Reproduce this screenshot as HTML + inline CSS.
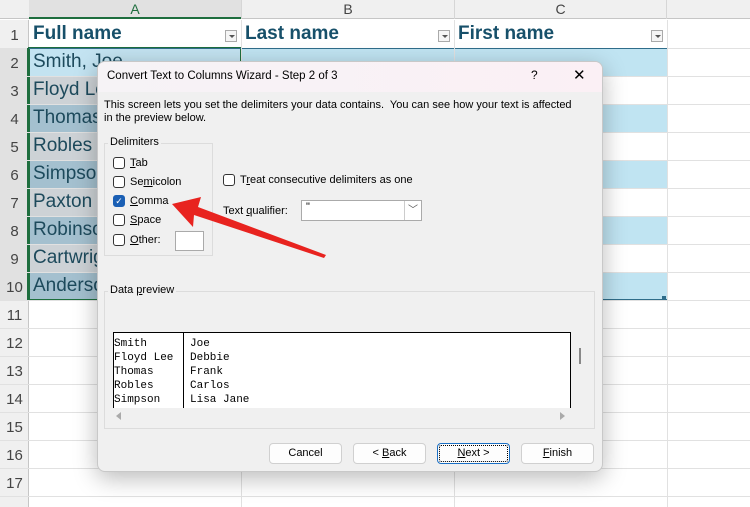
<!DOCTYPE html>
<html><head><meta charset="utf-8"><style>
*{margin:0;padding:0;box-sizing:border-box}
body{width:750px;height:507px;overflow:hidden;background:#fff;font-family:"Liberation Sans",sans-serif;position:relative}
.abs{position:absolute}
.hl{position:absolute;height:1px;background:#e1e1e1}
.vl{position:absolute;width:1px;background:#e1e1e1}
.rn{position:absolute;left:0;width:29px;text-align:center;font-size:15px;color:#444}
.cell{position:absolute;font-size:19px;color:#1d4a5c;padding-left:4px;line-height:28px}
.dlg{font-family:"Liberation Sans",sans-serif;font-size:11px;color:#000}
.cb{position:absolute;width:12px;height:12px;border:1px solid #333;border-radius:3px;background:#fff}
.btn{position:absolute;top:443px;width:73px;height:21px;border:1px solid #d0d0d0;border-radius:4px;background:#fdfdfd;text-align:center;line-height:19px;font-size:11px}
.mono{font-family:"Liberation Mono",monospace;font-size:11px;line-height:14px}
.dd{position:absolute;width:12px;height:12px;border:1px solid #aaa;background:#f5f5f5}
.dd:after{content:"";position:absolute;left:3px;top:4px;border-left:3px solid transparent;border-right:3px solid transparent;border-top:3px solid #555}
</style></head><body>
<div class="abs" style="left:0;top:0;width:750px;height:19px;background:#f0f0f0;border-bottom:1px solid #c6c6c6"></div>
<div class="abs" style="left:29px;top:0;width:212px;height:19px;background:#e1e1e1;border-bottom:2px solid #1e6e3e;text-align:center;font-size:14px;color:#1e6e3e;line-height:19px">A</div>
<div class="abs" style="left:241px;top:0;width:213px;height:19px;text-align:center;font-size:14px;color:#444;line-height:19px;border-left:1px solid #d6d6d6">B</div>
<div class="abs" style="left:454px;top:0;width:213px;height:19px;text-align:center;font-size:14px;color:#444;line-height:19px;border-left:1px solid #d6d6d6;border-right:1px solid #d6d6d6">C</div>
<div class="abs" style="left:0;top:20px;width:29px;height:487px;background:#f0f0f0;border-right:1px solid #c6c6c6"></div>
<div class="abs" style="left:0;top:48px;width:29px;height:252px;background:#e1e1e1;border-right:2px solid #1e6e3e"></div>
<div class="abs" style="left:241px;top:48px;width:426px;height:28px;background:#c0e4f2"></div>
<div class="abs" style="left:241px;top:104px;width:426px;height:28px;background:#c0e4f2"></div>
<div class="abs" style="left:241px;top:160px;width:426px;height:28px;background:#c0e4f2"></div>
<div class="abs" style="left:241px;top:216px;width:426px;height:28px;background:#c0e4f2"></div>
<div class="abs" style="left:241px;top:272px;width:426px;height:28px;background:#c0e4f2;border-bottom:1px solid #2f6d8a"></div>
<div class="abs" style="left:29px;top:48px;width:212px;height:28px;background:#c3e3f1"></div>
<div class="abs" style="left:29px;top:76px;width:212px;height:28px;background:#cdd2d6"></div>
<div class="abs" style="left:29px;top:104px;width:212px;height:28px;background:#a4c0cf"></div>
<div class="abs" style="left:29px;top:132px;width:212px;height:28px;background:#cdd2d6"></div>
<div class="abs" style="left:29px;top:160px;width:212px;height:28px;background:#a4c0cf"></div>
<div class="abs" style="left:29px;top:188px;width:212px;height:28px;background:#cdd2d6"></div>
<div class="abs" style="left:29px;top:216px;width:212px;height:28px;background:#a4c0cf"></div>
<div class="abs" style="left:29px;top:244px;width:212px;height:28px;background:#cdd2d6"></div>
<div class="abs" style="left:29px;top:272px;width:212px;height:28px;background:#a4c0cf"></div>
<div class="abs" style="left:28px;top:47px;width:214px;height:254px;border:2px solid #1e6e3e"></div>
<div class="hl" style="top:48px;background:#2f6d8a;left:29px;width:638px"></div>
<div class="hl" style="left:667px;top:48px;width:83px"></div>
<div class="hl" style="left:0;top:76px;width:750px"></div><div class="hl" style="left:0;top:104px;width:750px"></div>
<div class="hl" style="left:0;top:132px;width:750px"></div><div class="hl" style="left:0;top:160px;width:750px"></div>
<div class="hl" style="left:0;top:188px;width:750px"></div><div class="hl" style="left:0;top:216px;width:750px"></div>
<div class="hl" style="left:0;top:244px;width:750px"></div><div class="hl" style="left:0;top:272px;width:750px"></div>
<div class="hl" style="left:0;top:300px;width:750px"></div><div class="hl" style="left:0;top:328px;width:750px"></div>
<div class="hl" style="left:0;top:356px;width:750px"></div><div class="hl" style="left:0;top:384px;width:750px"></div>
<div class="hl" style="left:0;top:412px;width:750px"></div><div class="hl" style="left:0;top:440px;width:750px"></div>
<div class="hl" style="left:0;top:468px;width:750px"></div><div class="hl" style="left:0;top:496px;width:750px"></div>
<div class="vl" style="left:241px;top:20px;height:487px"></div>
<div class="vl" style="left:454px;top:20px;height:487px"></div>
<div class="vl" style="left:667px;top:20px;height:487px"></div>
<div class="rn" style="top:27px">1</div><div class="rn" style="top:55px">2</div><div class="rn" style="top:83px">3</div>
<div class="rn" style="top:111px">4</div><div class="rn" style="top:139px">5</div><div class="rn" style="top:167px">6</div>
<div class="rn" style="top:195px">7</div><div class="rn" style="top:223px">8</div><div class="rn" style="top:251px">9</div>
<div class="rn" style="top:279px">10</div><div class="rn" style="top:307px">11</div><div class="rn" style="top:335px">12</div>
<div class="rn" style="top:363px">13</div><div class="rn" style="top:391px">14</div><div class="rn" style="top:419px">15</div>
<div class="rn" style="top:447px">16</div><div class="rn" style="top:475px">17</div>
<div class="cell" style="left:29px;top:20px;font-weight:bold;color:#17506a">Full name</div>
<div class="cell" style="left:241px;top:20px;font-weight:bold;color:#17506a">Last name</div>
<div class="cell" style="left:454px;top:20px;font-weight:bold;color:#17506a">First name</div>
<div class="dd" style="left:225px;top:30px"></div>
<div class="dd" style="left:438px;top:30px"></div>
<div class="dd" style="left:651px;top:30px"></div>
<div class="cell" style="left:29px;top:48px">Smith, Joe</div>
<div class="cell" style="left:29px;top:76px">Floyd Lee</div>
<div class="cell" style="left:29px;top:104px">Thomas</div>
<div class="cell" style="left:29px;top:132px">Robles</div>
<div class="cell" style="left:29px;top:160px">Simpson</div>
<div class="cell" style="left:29px;top:188px">Paxton</div>
<div class="cell" style="left:29px;top:216px">Robinson</div>
<div class="cell" style="left:29px;top:244px">Cartwright</div>
<div class="cell" style="left:29px;top:272px">Anderson</div>
<div class="abs" style="left:662px;top:296px;width:4px;height:4px;background:#2f6d8a"></div>

<div class="abs dlg" style="left:97px;top:61px;width:506px;height:411px;background:#f0f0f0;border:1px solid #c8c8c8;border-radius:8px;box-shadow:0 6px 24px rgba(0,0,0,.28);overflow:hidden">
 <div class="abs" style="left:0;top:0;width:506px;height:30px;background:linear-gradient(90deg,#f6f3f6,#fbf0f5)"></div>
 <div class="abs" style="left:9px;top:8px;font-size:11.5px">Convert Text to Columns Wizard - Step 2 of 3</div>
 <div class="abs" style="left:433px;top:6px;font-size:12px">?</div>
 <div class="abs" style="left:475px;top:4px;font-size:15px;font-weight:200">✕</div>
 <div class="abs" style="left:6px;top:37px;line-height:13px;white-space:nowrap">This screen lets you set the delimiters your data contains.&nbsp; You can see how your text is affected<br>in the preview below.</div>
 <div class="abs" style="left:6px;top:81px;width:109px;height:113px;border:1px solid #dcdcdc"></div>
 <div class="abs" style="left:10px;top:74px;background:#f0f0f0;padding:0 2px">Delimiters</div>
 <div class="cb" style="left:15px;top:95px"></div><div class="abs" style="left:32px;top:95px"><u>T</u>ab</div>
 <div class="cb" style="left:15px;top:114px"></div><div class="abs" style="left:32px;top:114px">Se<u>m</u>icolon</div>
 <div class="cb" style="left:15px;top:133px;background:#1a5fb4;border-color:#1a5fb4;color:#fff;font-size:9px;line-height:10px;text-align:center">✓</div><div class="abs" style="left:32px;top:133px"><u>C</u>omma</div>
 <div class="cb" style="left:15px;top:152px"></div><div class="abs" style="left:32px;top:152px"><u>S</u>pace</div>
 <div class="cb" style="left:15px;top:172px"></div><div class="abs" style="left:32px;top:172px"><u>O</u>ther:</div>
 <div class="abs" style="left:77px;top:169px;width:29px;height:20px;background:#fff;border:1px solid #aaa"></div>
 <div class="cb" style="left:125px;top:112px"></div><div class="abs" style="left:142px;top:112px">T<u>r</u>eat consecutive delimiters as one</div>
 <div class="abs" style="left:125px;top:143px">Text <u>q</u>ualifier:</div>
 <div class="abs" style="left:203px;top:138px;width:121px;height:21px;background:#fff;border:1px solid #aaa;padding-left:4px">"</div>
 <div class="abs" style="left:306px;top:139px;width:17px;height:19px;border-left:1px solid #ccc;text-align:center;font-size:10px;color:#555">﹀</div>
 <div class="abs" style="left:6px;top:229px;width:491px;height:138px;border:1px solid #dcdcdc"></div>
 <div class="abs" style="left:10px;top:222px;background:#f0f0f0;padding:0 2px">Data <u>p</u>review</div>
 <div class="abs mono" style="left:15px;top:270px;width:458px;height:76px;background:#fff;border:1px solid #000;border-bottom:none;overflow:hidden">
  <div class="abs" style="left:69px;top:0;width:1px;height:76px;background:#000"></div>
  <div class="abs" style="left:0;top:4px;white-space:pre">Smith
Floyd Lee
Thomas
Robles
Simpson</div>
  <div class="abs" style="left:76px;top:4px;white-space:pre">Joe
Debbie
Frank
Carlos
Lisa Jane</div>
 </div>
 <div class="abs" style="left:481px;top:286px;width:2px;height:16px;background:#888"></div>
 <div class="abs" style="left:18px;top:350px;border-top:4px solid transparent;border-bottom:4px solid transparent;border-right:5px solid #aaa"></div>
 <div class="abs" style="left:462px;top:350px;border-top:4px solid transparent;border-bottom:4px solid transparent;border-left:5px solid #aaa"></div>
</div>
<div class="btn dlg" style="left:269px">Cancel</div>
<div class="btn dlg" style="left:353px">&lt; <u>B</u>ack</div>
<div class="btn dlg" style="left:437px;border:1px solid #1a6fc4;outline:1px dotted #000;outline-offset:-3px"><u>N</u>ext &gt;</div>
<div class="btn dlg" style="left:521px"><u>F</u>inish</div>
<svg class="abs" style="left:0;top:0" width="750" height="507"><polygon points="172,204 201,197 198,207 326,255 324,258 194,215 193,227" fill="#e8231f"/></svg>
</body></html>
